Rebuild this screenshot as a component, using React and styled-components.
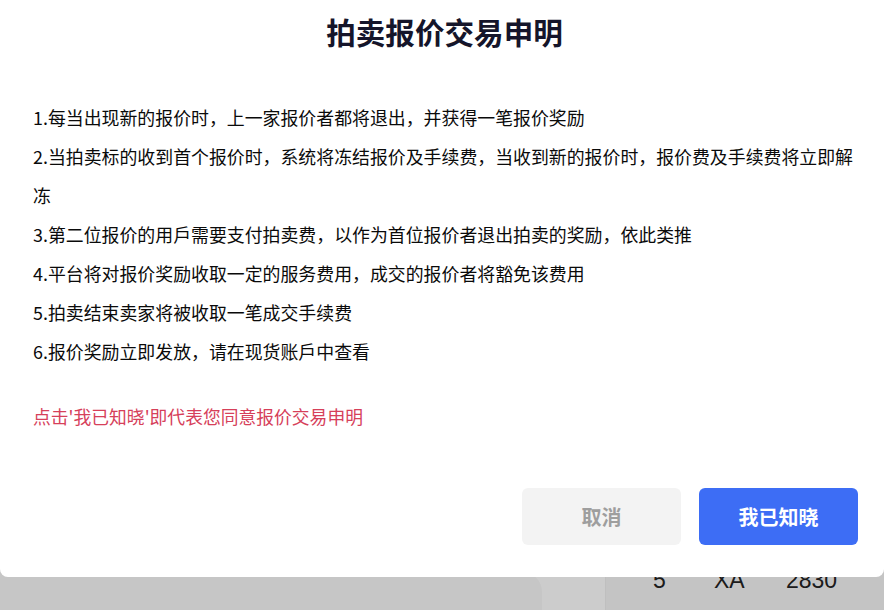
import React from 'react';
import styled, { createGlobalStyle } from 'styled-components';

const GlobalStyle = createGlobalStyle`
    html, body {
        margin: 0;
        padding: 0;
        height: 100%;
        overflow: hidden;
        background: #ffffff;
        font-family: "Noto Sans CJK SC", "Noto Sans", sans-serif;
    }
`;

const Page = styled.div`
    height: 100vh;
    display: grid;
    grid-template-columns: 542px 63px 1fr;
    align-items: end;
    background: #ffffff;
`;

const SideCard = styled.div`
    height: 38px;
    background: #f8f8f8;
    border-radius: 0 20px 0 0;
`;

const Book = styled.div`
    grid-column: 3;
    height: 50px;
    box-sizing: border-box;
    padding: 9px 0 0 47px;
    background: #f6f6f6;
    border-left: 1px solid #efefef;
`;

const BookRow = styled.div`
    display: grid;
    grid-template-columns: 61px 72px auto;
    font-family: "Liberation Sans", Arial, sans-serif;
    font-size: 23px;
    line-height: 23px;
    color: #232323;
`;

const Overlay = styled.div`
    position: fixed;
    inset: 0;
    background: rgba(0, 0, 0, 0.2);
`;

const Modal = styled.div`
    position: fixed;
    top: 0;
    left: 0;
    right: 0;
    background: #ffffff;
    border-radius: 0 0 8px 8px;
    padding: 12px 24px 32px 33px;
`;

const Title = styled.h2`
    margin: 0;
    padding-right: 4px;
    text-align: center;
    font-size: 29.6px;
    line-height: 40px;
    font-weight: 700;
    color: #15152a;
`;

const Rules = styled.div`
    margin-top: 46px;
    font-size: 17.9px;
    line-height: 39px;
    color: #0a0a0a;
`;

const Notice = styled.p`
    margin: 26px 0 0;
    font-size: 17.8px;
    line-height: 39px;
    color: #d6405a;
`;

const Actions = styled.div`
    margin-top: 52px;
    display: flex;
    justify-content: flex-end;
    gap: 18px;
    margin-right: 2px;
`;

const Button = styled.button`
    width: 159px;
    height: 57px;
    border: none;
    border-radius: 6px;
    font-family: inherit;
    font-size: 20px;
    font-weight: 700;
    cursor: pointer;
    background: ${p => (p.$primary ? '#3d6df5' : '#f3f3f3')};
    color: ${p => (p.$primary ? '#ffffff' : '#9e9e9e')};
`;

const rules = [
    '1.每当出现新的报价时，上一家报价者都将退出，并获得一笔报价奖励',
    '2.当拍卖标的收到首个报价时，系统将冻结报价及手续费，当收到新的报价时，报价费及手续费将立即解冻',
    '3.第二位报价的用戶需要支付拍卖费，以作为首位报价者退出拍卖的奖励，依此类推',
    '4.平台将对报价奖励收取一定的服务费用，成交的报价者将豁免该费用',
    '5.拍卖结束卖家将被收取一笔成交手续费',
    '6.报价奖励立即发放，请在现货账戶中查看',
];

const App = () => {
    return (
        <>
            <GlobalStyle />
            <Page>
                <SideCard />
                <Book>
                    <BookRow>
                        <span>5</span>
                        <span>XA</span>
                        <span>2830</span>
                    </BookRow>
                </Book>
            </Page>
            <Overlay />
            <Modal>
                <Title>拍卖报价交易申明</Title>
                <Rules>
                    {rules.map((text, index) => <div key={index}>{text}</div>)}
                </Rules>
                <Notice>点击'我已知晓'即代表您同意报价交易申明</Notice>
                <Actions>
                    <Button>取消</Button>
                    <Button $primary>我已知晓</Button>
                </Actions>
            </Modal>
        </>
    );
};

export default App;
